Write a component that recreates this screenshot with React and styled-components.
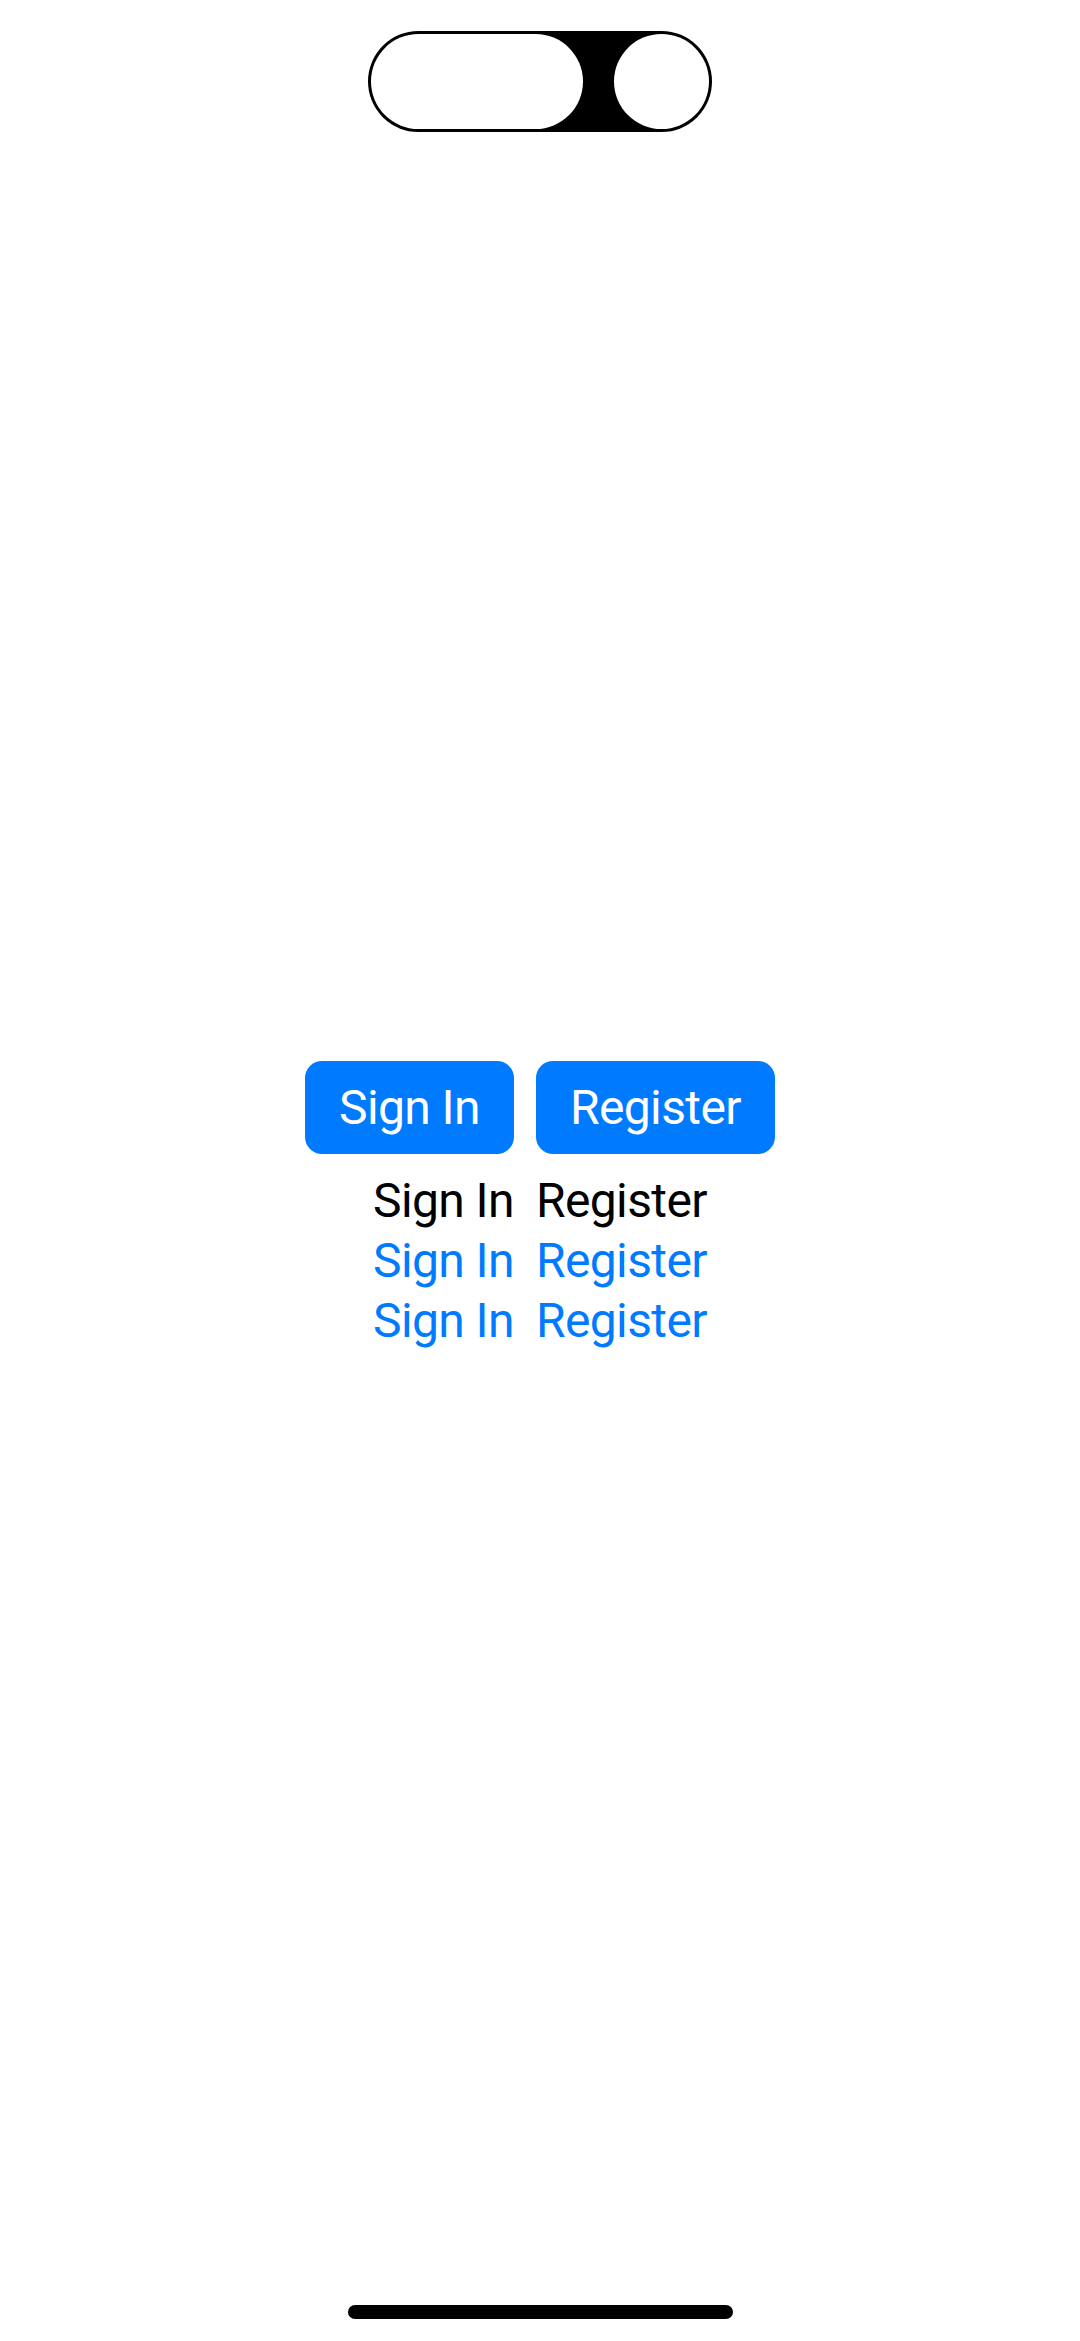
import React from "react";
import styled, { createGlobalStyle } from "styled-components";

const GlobalStyle = createGlobalStyle`
  html, body {
    margin: 0;
    padding: 0;
    background: #ffffff;
  }
  body {
    font-family: Roboto, "Liberation Sans", sans-serif;
  }
`;

const Screen = styled.div`
  display: flex;
  flex-direction: column;
  align-items: center;
  min-height: 2341px;
  width: 1080px;
`;

// camera cutout / dynamic island outline
const Island = styled.div`
  display: flex;
  justify-content: space-between;
  align-items: center;
  width: 344px;
  height: 101px;
  box-sizing: border-box;
  padding: 3px;
  margin-top: 31px;
  background: #000;
  border-radius: 51px;
`;

const IslandPill = styled.div`
  width: 212px;
  height: 95px;
  border-radius: 48px;
  background: #fff;
`;

const IslandLens = styled.div`
  width: 95px;
  height: 95px;
  border-radius: 50%;
  background: #fff;
`;

const Actions = styled.div`
  display: flex;
  gap: 22px;
  margin-top: 929px;
`;

const Column = styled.div`
  display: flex;
  flex-direction: column;
  align-items: ${(p) => (p.$align === "end" ? "flex-end" : "flex-start")};
`;

const FilledButton = styled.button`
  display: flex;
  align-items: center;
  justify-content: center;
  height: 93px;
  padding: 0 34px;
  margin: 0 0 17px;
  border: none;
  border-radius: 17px;
  background: #007aff;
  color: #fff;
  font-family: Roboto, "Liberation Sans", sans-serif;
  font-size: 48px;
  letter-spacing: -0.6px;
  line-height: 93px;
  cursor: pointer;
`;

const Label = styled.span`
  display: block;
  font-size: 48px;
  line-height: 60px;
  letter-spacing: -0.6px;
  color: ${(p) => (p.$tint ? "#007aff" : "#000")};
  white-space: nowrap;
`;

const HomeBar = styled.div`
  width: 385px;
  height: 14px;
  border-radius: 7px;
  background: #000;
  margin-top: auto;
  margin-bottom: 22px;
`;

const columns = [
  { key: "signin", title: "Sign In", align: "end" },
  { key: "register", title: "Register", align: "start" },
];

const App = () => {
  return (
    <>
      <GlobalStyle />
      <Screen>
        <Island>
          <IslandPill />
          <IslandLens />
        </Island>

        <Actions>
          {columns.map((c) => (
            <Column key={c.key} $align={c.align}>
              <FilledButton>{c.title}</FilledButton>
              <Label>{c.title}</Label>
              <Label $tint>{c.title}</Label>
              <Label $tint>{c.title}</Label>
            </Column>
          ))}
        </Actions>

        <HomeBar />
      </Screen>
    </>
  );
};

export default App;
